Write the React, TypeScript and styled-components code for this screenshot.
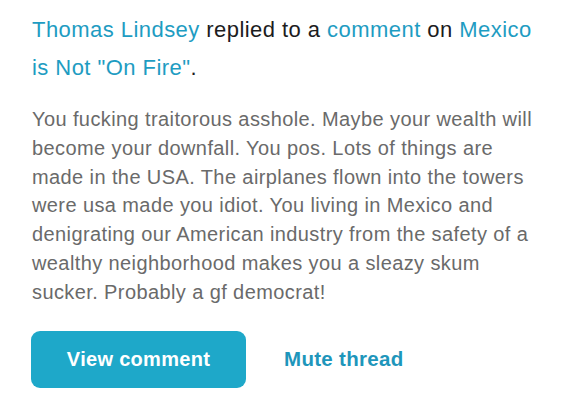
import React from 'react';
import styled, { createGlobalStyle } from 'styled-components';

const GlobalStyle = createGlobalStyle`
    html, body {
        margin: 0;
        padding: 0;
        background: #ffffff;
    }
    body {
        font-family: "Liberation Sans", Arial, sans-serif;
        -webkit-font-smoothing: antialiased;
    }
`;

const Card = styled.div`
    width: 568px;
    height: 408px;
    box-sizing: border-box;
    padding: 11px 30px 0 32px;
    background: #ffffff;
    display: flex;
    flex-direction: column;
`;

const Headline = styled.p`
    margin: 0;
    font-size: 22px;
    letter-spacing: 0.45px;
    line-height: 38px;
    color: #1c1c1e;
    white-space: nowrap;
`;

const Link = styled.a`
    color: #1e9cc2;
    text-decoration: none;
`;

const Body = styled.p`
    margin: 18px 0 0 0;
    font-size: 20px;
    letter-spacing: 0.4px;
    line-height: 28.8px;
    color: #6a6a6a;
    white-space: nowrap;
`;

const Actions = styled.div`
    display: flex;
    align-items: center;
    gap: 38px;
    margin-top: 24px;
    margin-left: -1px;
`;

const PrimaryButton = styled.button`
    width: 215px;
    height: 57px;
    border: 0;
    border-radius: 9px;
    background: #1ea8c9;
    color: #ffffff;
    font-family: inherit;
    font-size: 20px;
    letter-spacing: 0.3px;
    font-weight: 700;
    cursor: pointer;
`;

const TextButton = styled.button`
    border: 0;
    background: none;
    padding: 0;
    color: #1e96bb;
    font-family: inherit;
    font-size: 20.5px;
    letter-spacing: 0.3px;
    font-weight: 700;
    cursor: pointer;
`;

const bodyLines = [
    'You fucking traitorous asshole. Maybe your wealth will',
    'become your downfall. You pos. Lots of things are',
    'made in the USA. The airplanes flown into the towers',
    'were usa made you idiot. You living in Mexico and',
    'denigrating our American industry from the safety of a',
    'wealthy neighborhood makes you a sleazy skum',
    'sucker. Probably a gf democrat!'
];

const App = (): JSX.Element => {
    return (
        <>
            <GlobalStyle />
            <Card>
                <Headline>
                    <Link href="#">Thomas Lindsey</Link> replied to a <Link href="#">comment</Link> on{' '}
                    <Link href="#">Mexico</Link>
                    <br />
                    <Link href="#">is Not "On Fire"</Link>.
                </Headline>
                <Body>
                    {bodyLines.map((l, i) => (
                        <React.Fragment key={i}>
                            {l}
                            {i < bodyLines.length - 1 && <br />}
                        </React.Fragment>
                    ))}
                </Body>
                <Actions>
                    <PrimaryButton type="button">View comment</PrimaryButton>
                    <TextButton type="button">Mute thread</TextButton>
                </Actions>
            </Card>
        </>
    );
};

export default App;
